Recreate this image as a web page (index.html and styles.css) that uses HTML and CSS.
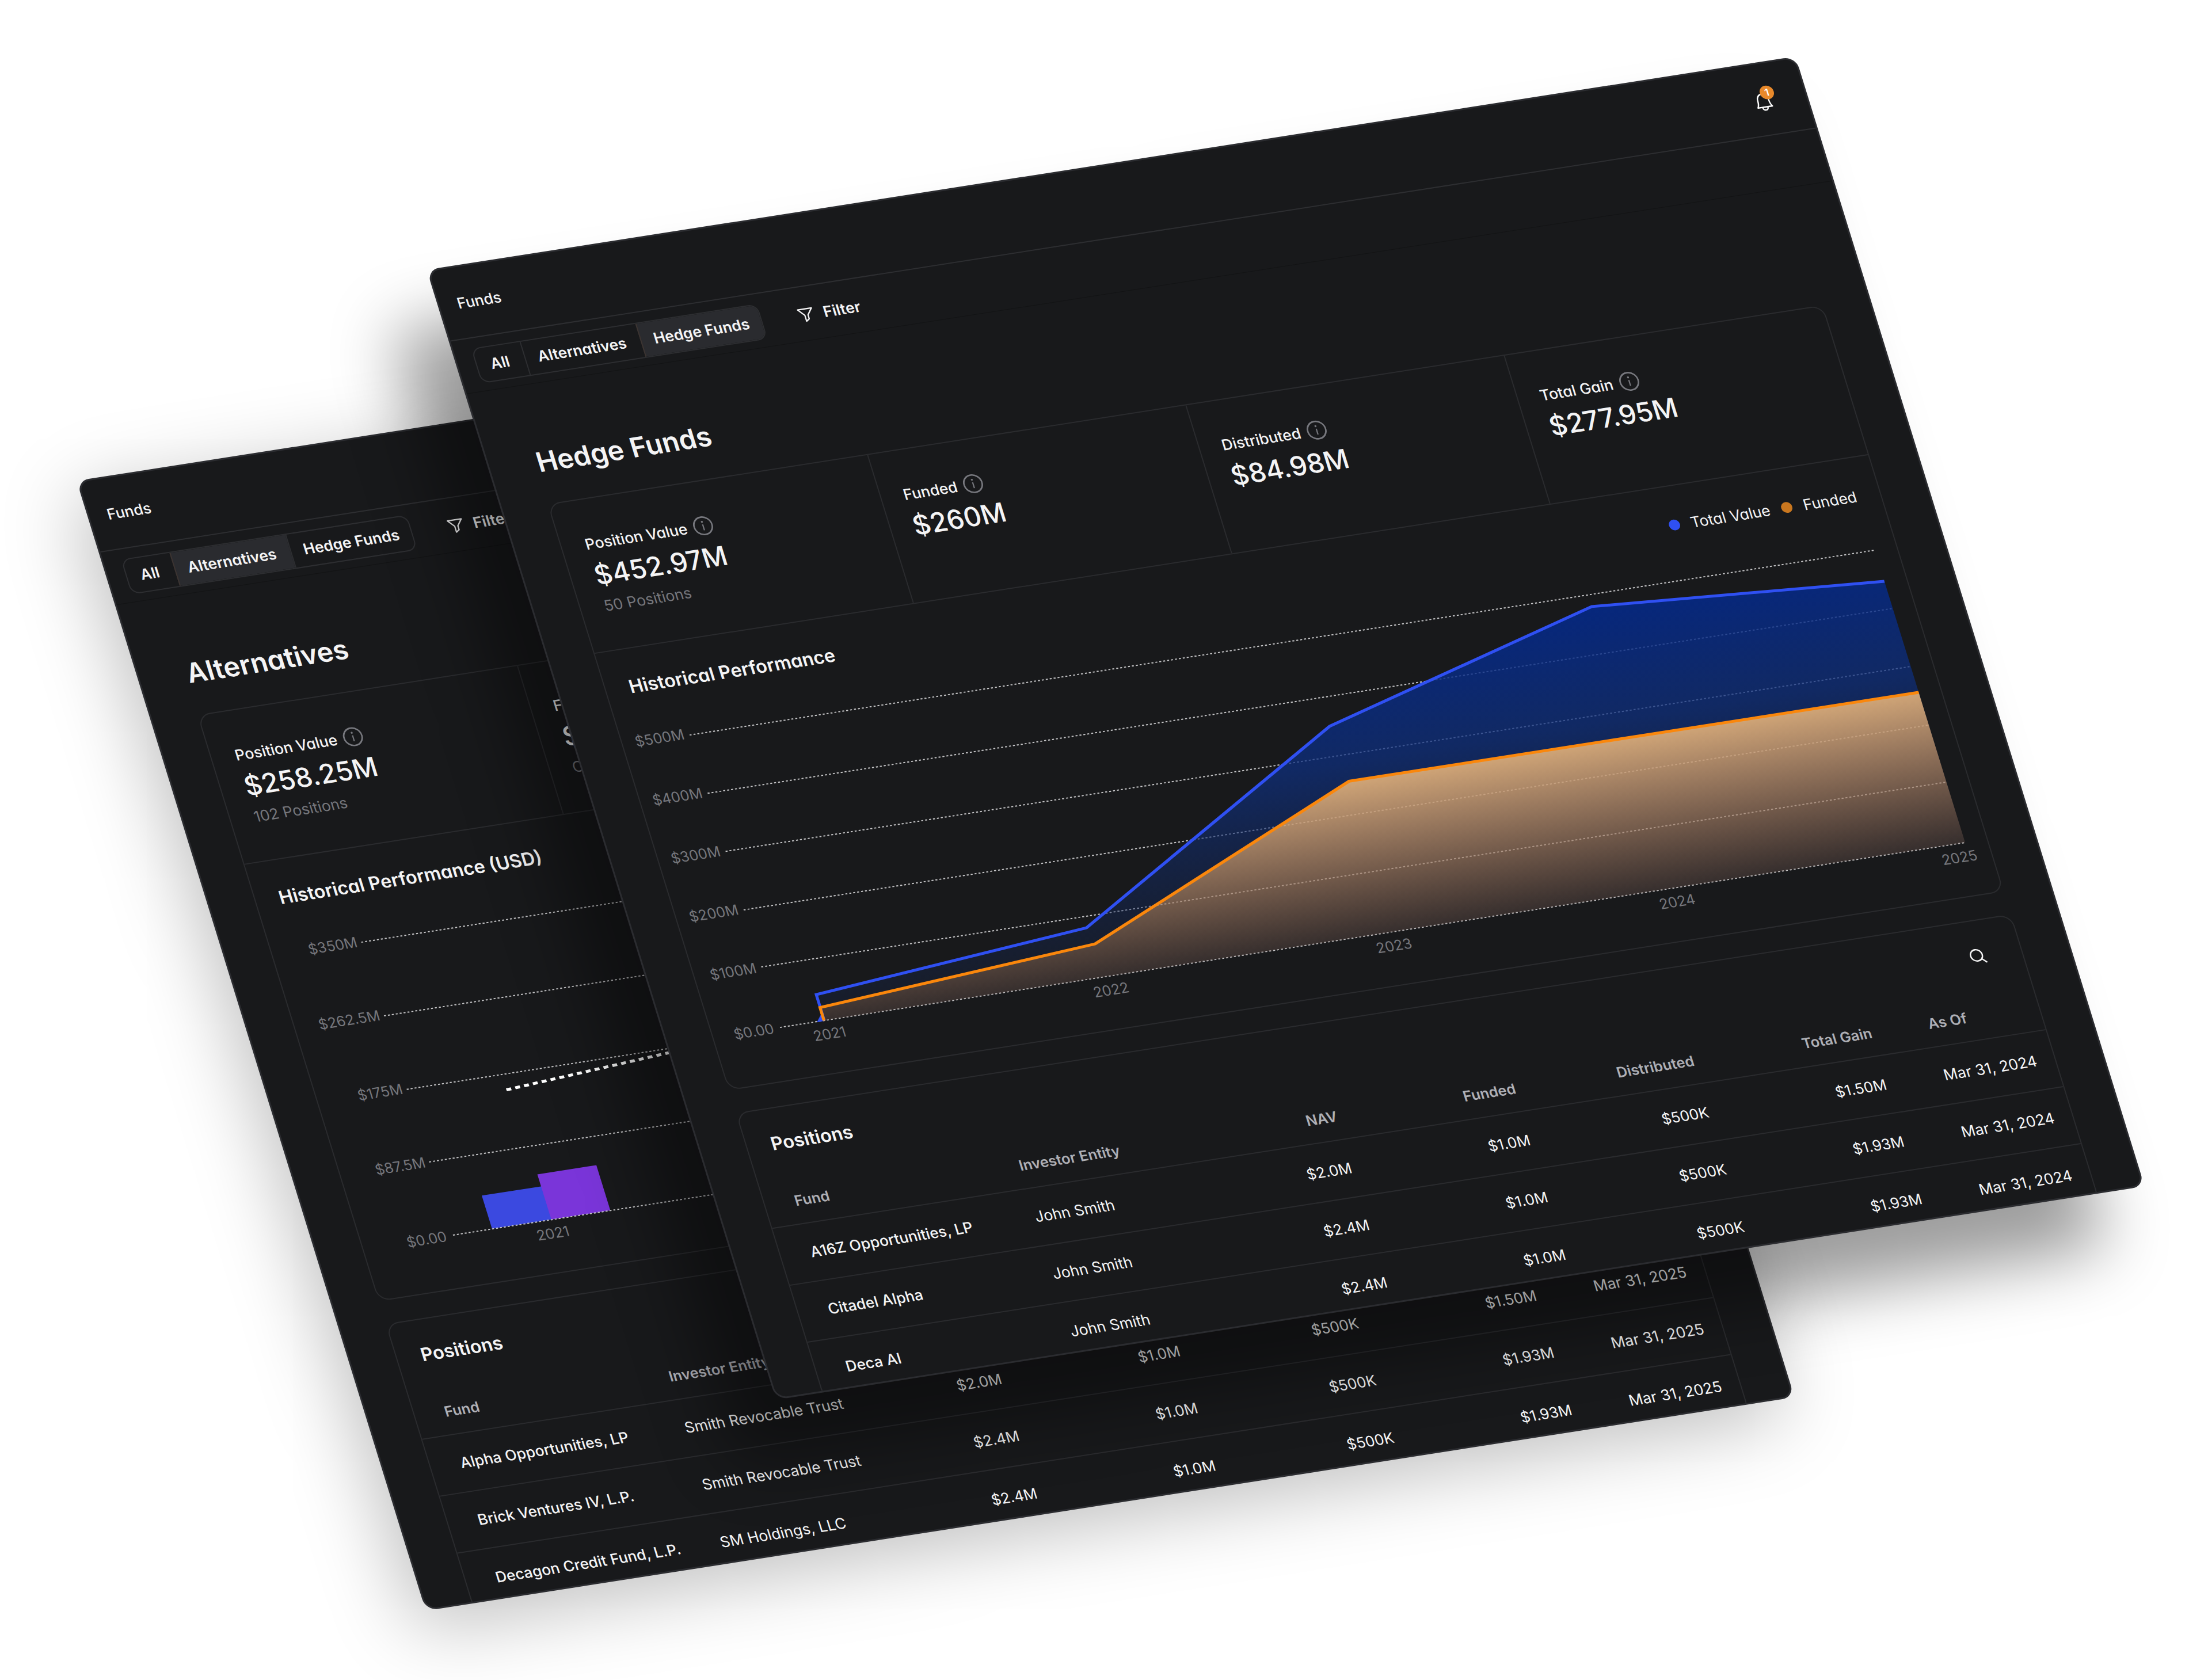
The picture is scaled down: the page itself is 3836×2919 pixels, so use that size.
FILE: index.html
```html
<!DOCTYPE html>
<html lang="en">
<head>
<meta charset="utf-8">
<title>Funds</title>
<link rel="stylesheet" href="styles.css">
</head>
<body>
<svg class="defs" width="0" height="0" aria-hidden="true">
  <symbol id="i-info" viewBox="0 0 34 34">
    <circle cx="17" cy="17" r="15.4" fill="none" stroke="currentColor" stroke-width="2.7"/>
    <path d="M17 14.5V25" fill="none" stroke="currentColor" stroke-width="2.2"/>
    <circle cx="17" cy="10" r="1.7" fill="currentColor"/>
  </symbol>
  <symbol id="i-funnel" viewBox="0 0 28 28">
    <path d="M2 3.5H26L17 14.5V21.5L11.5 25V14.5Z" fill="none" stroke="currentColor" stroke-width="2.3" stroke-linejoin="round"/>
  </symbol>
  <symbol id="i-bell" viewBox="0 0 32 34">
    <path d="M3.5 26.5C5.5 23.5 6.6 20 6.6 14.5C6.6 8 10.5 3.5 16 3.5S25.4 8 25.4 14.5C25.4 20 26.5 23.5 28.5 26.5Z" fill="none" stroke="currentColor" stroke-width="2.4" stroke-linejoin="round"/>
    <path d="M11.5 27C11.5 33.5 20.5 33.5 20.5 27" fill="none" stroke="currentColor" stroke-width="2.4"/>
  </symbol>
  <symbol id="i-search" viewBox="0 0 30 30">
    <circle cx="13.5" cy="13.5" r="10" fill="none" stroke="currentColor" stroke-width="2.4"/>
    <path d="M21 21L28 28" fill="none" stroke="currentColor" stroke-width="2.4"/>
  </symbol>
</svg>

<main class="stage">

  <section class="panel panel-back">
    <header class="topbar"><span>Funds</span></header>
    <nav class="toolbar">
      <div class="tabs">
        <span class="tab tab-all">All</span>
        <span class="tab tab-alt active">Alternatives</span>
        <span class="tab tab-hedge">Hedge Funds</span>
      </div>
      <div class="filter"><svg class="ic-funnel"><use href="#i-funnel"/></svg>Filter</div>
    </nav>
    <div class="content">
      <h1>Alternatives</h1>
      <div class="card">
        <div class="stats">
          <div class="stat">
            <div class="stat-label">Position Value<svg class="ic-info"><use href="#i-info"/></svg></div>
            <div class="stat-value">$258.25M</div>
            <div class="stat-sub">102 Positions</div>
          </div>
          <div class="stat">
            <div class="stat-label">Funded</div>
            <div class="stat-value">$200M</div>
            <div class="stat-sub">Committed</div>
          </div>
          <div class="stat"></div>
          <div class="stat"></div>
        </div>
        <div class="chart-head"><h2>Historical Performance (USD)</h2></div>
        <svg class="chart" viewBox="81.5 788 2212 694">
          <rect x="305" y="1330.5" width="104" height="59.5" fill="#3b49e0"/>
          <rect x="408" y="1309" width="102.5" height="81" fill="#7a35d9"/>
          <g class="grid">
            <path d="M235 865.4H2256M235 997.3H2256M235 1128.9H2256M235 1259H2256M237 1390.3H2256"/>
          </g>
          <path d="M400 1156.4L762 1131L1260 1040" fill="none" stroke="#fff" stroke-width="5" stroke-dasharray="8.5 7.2"/>
          <g class="axis axis-y">
            <text x="228" y="872.7">$350M</text>
            <text x="228" y="1003.8">$262.5M</text>
            <text x="228" y="1135.6">$175M</text>
            <text x="228" y="1267.3">$87.5M</text>
            <text x="225.5" y="1399.5">$0.00</text>
          </g>
          <g class="axis axis-x"><text x="403.5" y="1422.7">2021</text></g>
        </svg>
      </div>
      <div class="card positions">
        <div class="pos-head"><h2>Positions</h2></div>
        <div class="row row-head">
          <span>Fund</span><span>Investor Entity</span><span class="n">NAV</span><span class="n">Funded</span><span class="n">Distributed</span><span class="n">Total Gain</span><span class="d">As Of</span>
        </div>
        <div class="row">
          <span class="name">Alpha Opportunities, LP</span><span>Smith Revocable Trust</span><span class="n">$2.0M</span><span class="n">$1.0M</span><span class="n">$500K</span><span class="n">$1.50M</span><span class="d">Mar 31, 2025</span>
        </div>
        <div class="row">
          <span class="name">Brick Ventures IV, L.P.</span><span>Smith Revocable Trust</span><span class="n">$2.4M</span><span class="n">$1.0M</span><span class="n">$500K</span><span class="n">$1.93M</span><span class="d">Mar 31, 2025</span>
        </div>
        <div class="row">
          <span class="name">Decagon Credit Fund, L.P.</span><span>SM Holdings, LLC</span><span class="n">$2.4M</span><span class="n">$1.0M</span><span class="n">$500K</span><span class="n">$1.93M</span><span class="d">Mar 31, 2025</span>
        </div>
      </div>
    </div>
  </section>

  <section class="panel panel-front">
    <header class="topbar">
      <span>Funds</span>
      <div class="bell"><svg class="ic-bell"><use href="#i-bell"/></svg><b class="badge">1</b></div>
    </header>
    <nav class="toolbar">
      <div class="tabs">
        <span class="tab tab-all">All</span>
        <span class="tab tab-alt">Alternatives</span>
        <span class="tab tab-hedge active">Hedge Funds</span>
      </div>
      <div class="filter"><svg class="ic-funnel"><use href="#i-funnel"/></svg>Filter</div>
    </nav>
    <div class="content">
      <h1>Hedge Funds</h1>
      <div class="card">
        <div class="stats">
          <div class="stat">
            <div class="stat-label">Position Value<svg class="ic-info"><use href="#i-info"/></svg></div>
            <div class="stat-value">$452.97M</div>
            <div class="stat-sub">50 Positions</div>
          </div>
          <div class="stat">
            <div class="stat-label">Funded<svg class="ic-info"><use href="#i-info"/></svg></div>
            <div class="stat-value">$260M</div>
          </div>
          <div class="stat">
            <div class="stat-label">Distributed<svg class="ic-info"><use href="#i-info"/></svg></div>
            <div class="stat-value">$84.98M</div>
          </div>
          <div class="stat">
            <div class="stat-label">Total Gain<svg class="ic-info"><use href="#i-info"/></svg></div>
            <div class="stat-value">$277.95M</div>
          </div>
        </div>
        <div class="chart-head">
          <h2>Historical Performance</h2>
          <div class="legend">
            <span class="dot dot-blue"></span><span class="key">Total Value</span>
            <span class="dot dot-orange"></span><span>Funded</span>
          </div>
        </div>
        <svg class="chart" viewBox="81.5 788 2212 694">
          <defs>
            <linearGradient id="g-blue" gradientUnits="userSpaceOnUse" x1="0" y1="887" x2="0" y2="1390">
              <stop offset="0" stop-color="#04298a" stop-opacity=".88"/>
              <stop offset=".4" stop-color="#0e2f7e" stop-opacity=".73"/>
              <stop offset="1" stop-color="#16254a" stop-opacity=".25"/>
            </linearGradient>
            <linearGradient id="g-orange" gradientUnits="userSpaceOnUse" x1="0" y1="1120" x2="0" y2="1390">
              <stop offset="0" stop-color="#ffc47e" stop-opacity=".8"/>
              <stop offset="1" stop-color="#f5a258" stop-opacity=".14"/>
            </linearGradient>
          </defs>
          <g class="grid">
            <path d="M197 866H2256M197 970.3H2256M197 1074.3H2256M197 1179.2H2256M197 1281.4H2256M197 1389.7H2256"/>
          </g>
          <path d="M274 1389.7V1343.2L756 1301.2L1262.4 1021.6L1758.2 886.9L2256 921.8V1389.7Z" fill="url(#g-blue)"/>
          <path d="M274 1389.7V1343.2L756 1301.2L1262.4 1021.6L1758.2 886.9L2256 921.8" fill="none" stroke="#2f50f2" stroke-width="5"/>
          <path d="M261 1390.5L272 1378V1390.5Z" fill="#2f50f2"/>
          <path d="M273.5 1389.7V1366.5L762 1331L1266.4 1120.7H2256V1389.7Z" fill="url(#g-orange)"/>
          <path d="M273.5 1389.7V1366.5L762 1331L1266.4 1120.7H2256" fill="none" stroke="#fa870c" stroke-width="5"/>
          <g class="axis axis-y">
            <text x="188" y="871.8">$500M</text>
            <text x="188" y="976.8">$400M</text>
            <text x="188" y="1081.2">$300M</text>
            <text x="188" y="1185.7">$200M</text>
            <text x="188" y="1290.4">$100M</text>
            <text x="186" y="1398.5">$0.00</text>
          </g>
          <g class="axis axis-x">
            <text x="276" y="1422.7">2021</text>
            <text x="765" y="1422.7">2022</text>
            <text x="1256.5" y="1422.7">2023</text>
            <text x="1748.5" y="1422.7">2024</text>
            <text x="2239" y="1422.7">2025</text>
          </g>
        </svg>
      </div>
      <div class="card positions">
        <div class="pos-head"><h2>Positions</h2><svg class="ic-search"><use href="#i-search"/></svg></div>
        <div class="row row-head">
          <span>Fund</span><span>Investor Entity</span><span class="n">NAV</span><span class="n">Funded</span><span class="n">Distributed</span><span class="n">Total Gain</span><span class="d">As Of</span>
        </div>
        <div class="row">
          <span class="name">A16Z Opportunities, LP</span><span>John Smith</span><span class="n">$2.0M</span><span class="n">$1.0M</span><span class="n">$500K</span><span class="n">$1.50M</span><span class="d">Mar 31, 2024</span>
        </div>
        <div class="row">
          <span class="name">Citadel Alpha</span><span>John Smith</span><span class="n">$2.4M</span><span class="n">$1.0M</span><span class="n">$500K</span><span class="n">$1.93M</span><span class="d">Mar 31, 2024</span>
        </div>
        <div class="row">
          <span class="name">Deca AI</span><span>John Smith</span><span class="n">$2.4M</span><span class="n">$1.0M</span><span class="n">$500K</span><span class="n">$1.93M</span><span class="d">Mar 31, 2024</span>
        </div>
      </div>
    </div>
  </section>

</main>
</body>
</html>
```
FILE: styles.css
```css
* { box-sizing: border-box; margin: 0; padding: 0; }

body {
  background: #fff;
  color: #f4f4f5;
  font-family: Inter, "Liberation Sans", sans-serif;
  font-feature-settings: "cv11";
  font-size: 26px;
  line-height: 33px;
  white-space: nowrap;
}

.defs { display: block; }

.stage {
  position: relative;
  width: 3836px;
  height: 2919px;
  overflow: hidden;
}

/* Both windows share one tilted plane */
.panel {
  position: absolute;
  left: 0;
  top: 0;
  display: flex;
  flex-direction: column;
  width: 2378px;
  height: 2024px;
  border: 3.5px solid #2b2c30;
  border-radius: 21px;
  background: #18191b;
  transform-origin: 0 0;
}
.panel-back {
  transform: matrix(1, -0.156, 0.29973, 0.97, 133, 835.4);
  box-shadow: -20px 30px 130px rgba(0, 0, 0, .25);
}
.panel-front {
  transform: matrix(1, -0.156, 0.29973, 0.97, 741.3, 468.9);
  box-shadow: -91px 96px 112px rgba(0, 0, 0, .39);
}

.topbar {
  display: flex;
  align-items: center;
  justify-content: space-between;
  flex: none;
  height: 126px;
  padding: 1px 57px 0 30.5px;
  border-bottom: 2px solid #2d2e31;
  font-weight: 500;
}
.bell { position: relative; display: flex; padding-top: 6px; }
.ic-bell { width: 32px; height: 34px; color: #fff; }
.badge {
  position: absolute;
  left: 14px;
  top: -4px;
  width: 24px;
  height: 24px;
  border-radius: 50%;
  background: #e8892b;
  color: #fff;
  font-size: 17px;
  font-weight: 600;
  line-height: 24px;
  text-align: center;
}

.toolbar {
  display: flex;
  align-items: flex-start;
  gap: 62px;
  flex: none;
  height: 94px;
  padding: 17px 30px 0;
  border-bottom: 1px solid #131415;
  font-weight: 600;
}
.tabs {
  display: flex;
  height: 63px;
  border: 2px solid #2d2e31;
  border-radius: 16px;
  overflow: hidden;
}
.tab {
  display: flex;
  align-items: center;
  justify-content: center;
}
.tab + .tab { border-left: 2px solid #2d2e31; }
.tab-all { width: 82px; padding-right: 4px; }
.tab-alt { width: 201px; padding-right: 4px; }
.tab-hedge { width: 210px; }
.tab.active { background: #2a2b2f; border-left-color: #3c3431; }
.filter { display: flex; align-items: center; gap: 16px; height: 63px; }
.ic-funnel { width: 28px; height: 28px; }

.content {
  display: flex;
  flex-direction: column;
  flex: 1;
  min-height: 0;
  padding: 105.5px 76.5px 0;
  overflow: hidden;
}
h1 { margin: 0 0 43.5px 4px; font-size: 47.4px; font-weight: 600; line-height: 60px; }
h2 { font-size: 31.8px; font-weight: 600; line-height: 40px; }

.card {
  flex: none;
  width: 2216px;
  border: 2px solid #2a2b2e;
  border-radius: 22px;
}
.stats {
  display: grid;
  grid-template-columns: repeat(4, 1fr);
  height: 266.5px;
  border-bottom: 2px solid #2a2b2e;
}
.stat { padding: 60.5px 0 0 40.5px; }
.stat + .stat { border-left: 2px solid #2a2b2e; padding-left: 38.5px; }
.stat-label { display: flex; align-items: center; gap: 11px; height: 33px; font-weight: 500; }
.ic-info { width: 34px; height: 34px; color: #77787e; }
.stat-value { margin: 10px 0 9px; font-size: 46.5px; font-weight: 500; line-height: 58px; }
.stat-sub { color: #75767b; }

.chart-head {
  display: flex;
  justify-content: space-between;
  padding: 46.5px 40px 0 40.5px;
}
.legend { display: flex; align-items: center; padding-top: 2px; }
.dot { width: 19px; height: 19px; border-radius: 50%; margin-right: 19px; }
.dot-blue { background: #2f50f2; }
.dot-orange { background: #c9771f; }
.key { margin-right: 20px; }

.chart { display: block; width: 2212px; height: 694px; }
.grid { fill: none; stroke: #c4c4c6; stroke-width: 2; stroke-dasharray: 3.4 3.4; }
.axis { fill: #75767b; font-size: 24.8px; }
.axis-y { text-anchor: end; }
.axis-x { text-anchor: middle; }

.positions { margin-top: 39.5px; font-feature-settings: normal; }
.pos-head {
  display: flex;
  align-items: center;
  justify-content: space-between;
  height: 40px;
  margin: 41.5px 60px 44.5px 41.5px;
}
.ic-search { width: 30px; height: 30px; }
.row {
  display: grid;
  grid-template-columns: 390px 240px 310px 310px 310px 309px 1fr;
  align-items: center;
  height: 102.3px;
  padding-left: 51.5px;
  border-bottom: 2px solid #2a2b2e;
}
.row-head { height: 80px; color: #aeafb5; font-size: 25px; font-weight: 600; }
.name { font-size: 25.8px; font-weight: 500; }
.n { text-align: right; font-size: 25.5px; }
.row-head .n { margin-right: -2px; font-size: 25px; }
.d { padding-left: 100px; }
```
